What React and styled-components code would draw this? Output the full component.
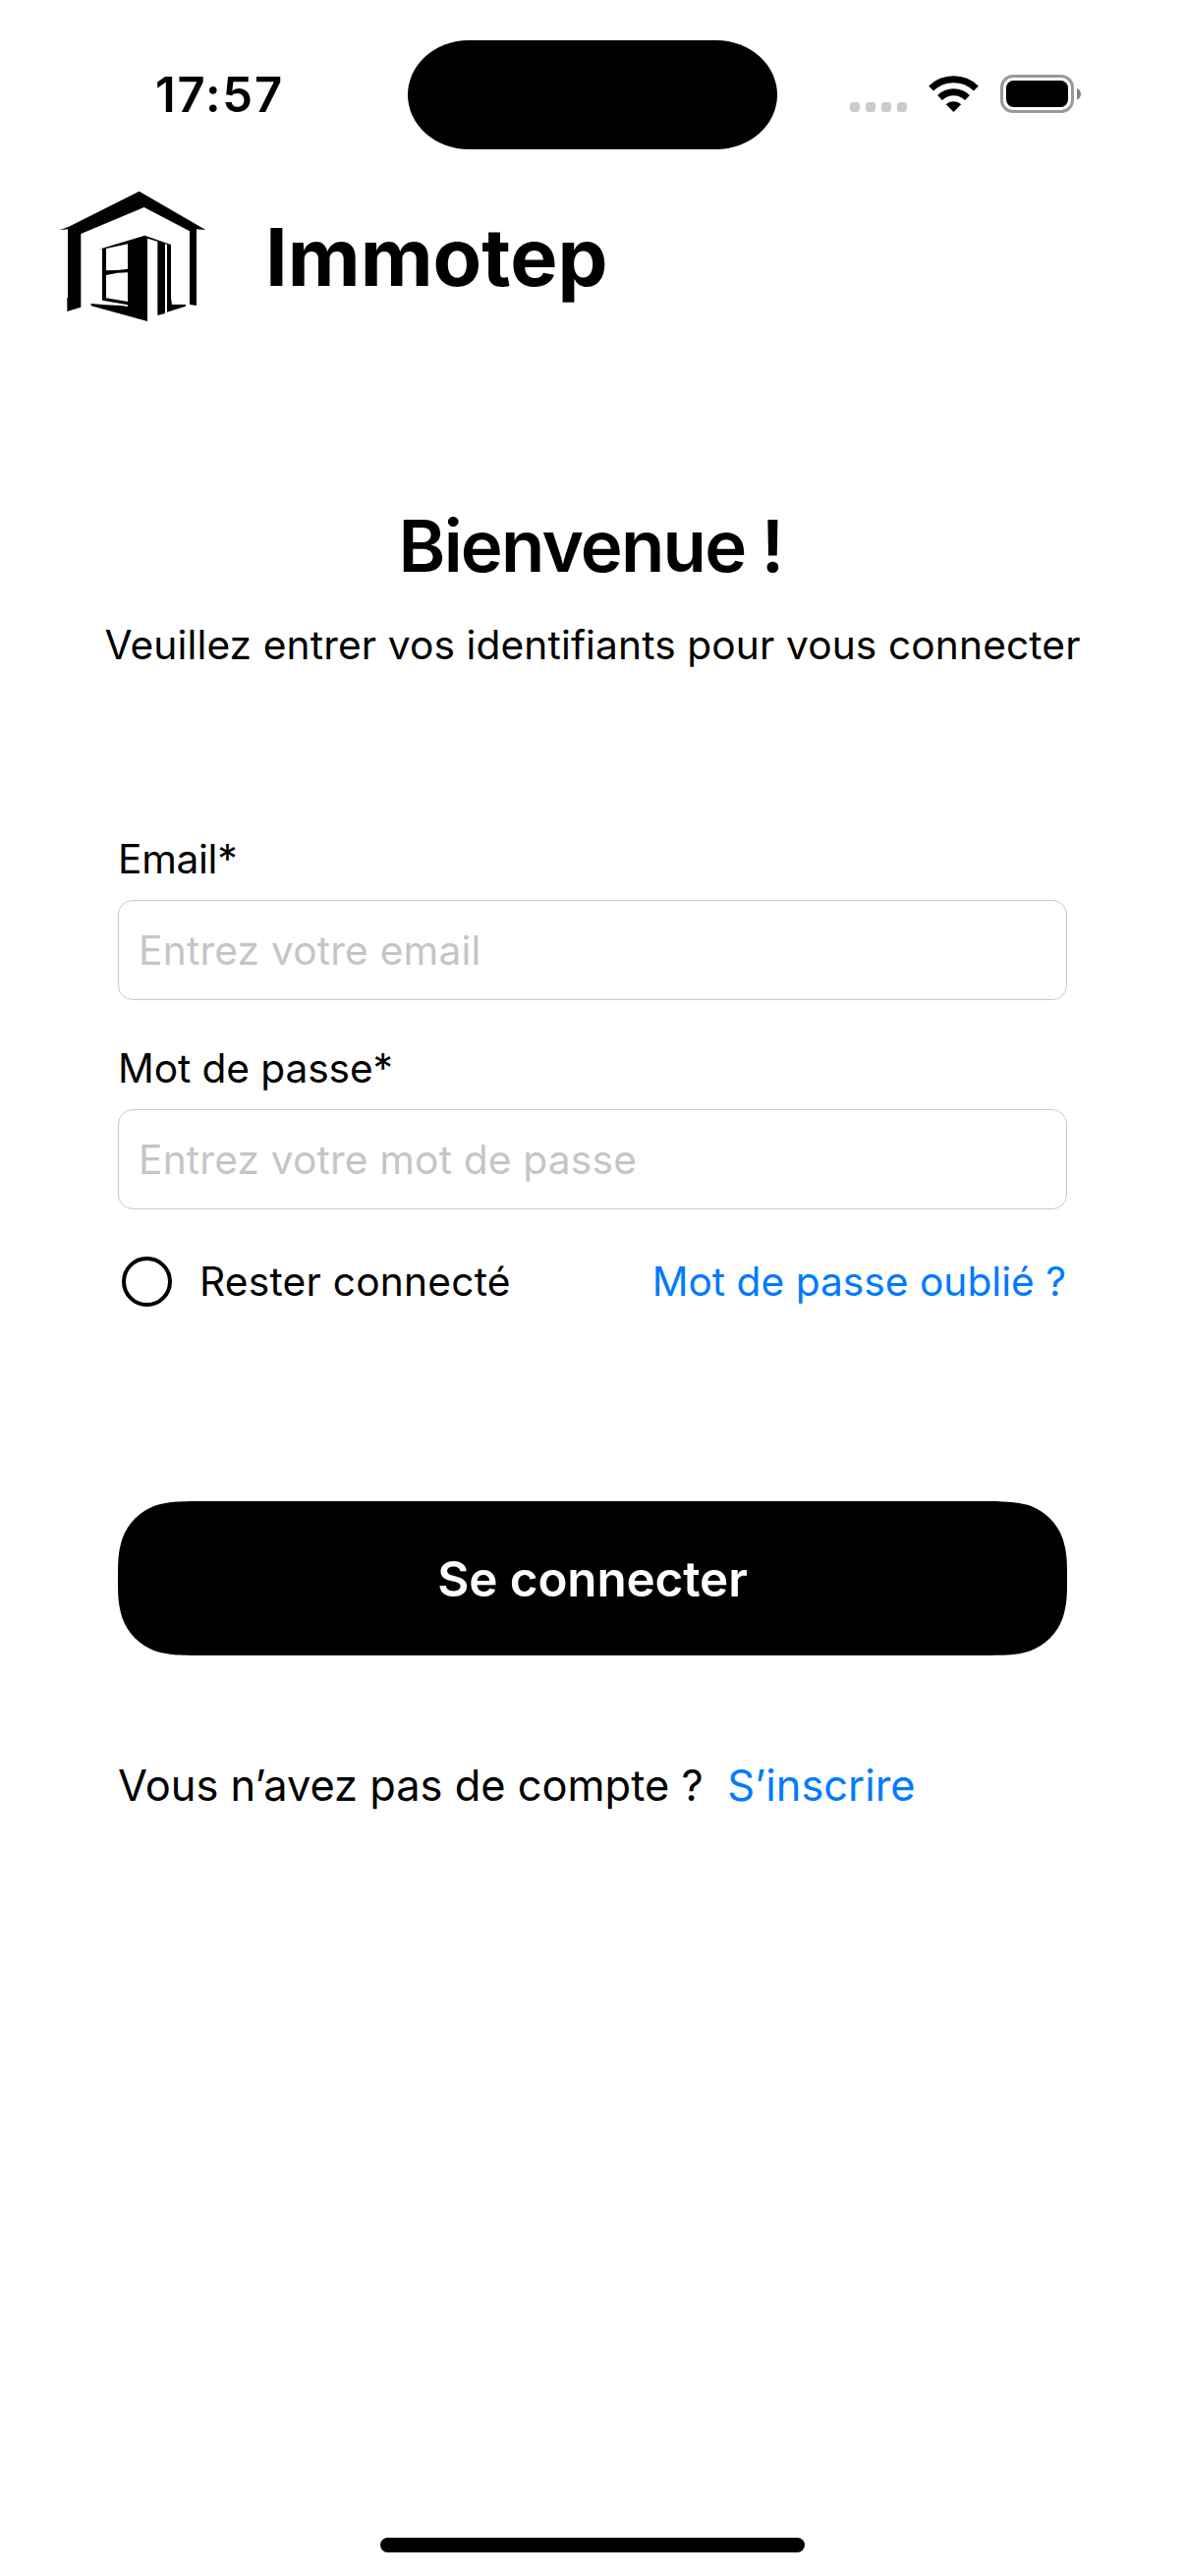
import React from "react";
import styled, { createGlobalStyle } from "styled-components";

const GlobalStyle = createGlobalStyle`
  *, *::before, *::after { box-sizing: border-box; }
  body { margin: 0; background: #fff; }
`;

const Screen = styled.main`
  width: 1206px;
  height: 2622px;
  display: flex;
  flex-direction: column;
  background: #fff;
  color: #000;
  font-family: Inter, "Liberation Sans", sans-serif;
  overflow: hidden;
`;

const StatusBar = styled.div`
  height: 193px;
  padding-top: 41px;
  display: grid;
  grid-template-columns: 414px 378px 1fr;
  align-items: start;
`;

const Clock = styled.time`
  padding: 0 0 0 158px;
  font-size: 49px;
  line-height: 111px;
  font-weight: 600;
  letter-spacing: ${(p) => p.$track}px;
`;

const Island = styled.div`
  width: 376px;
  height: 111px;
  margin-left: 1px;
  border-radius: 62px / 55.5px;
  background: #000;
`;

const StatusIcons = styled.div`
  height: 111px;
  padding: 35px 0 0 73px;
  display: flex;
`;

const Brand = styled.header`
  height: 135px;
  padding-left: 60px;
  display: flex;
  align-items: center;
  gap: 60px;
`;

const BrandName = styled.span`
  padding-top: 3px;
  font-size: 81px;
  line-height: 132px;
  font-weight: 700;
  letter-spacing: ${(p) => p.$track}px;
`;

const Intro = styled.section`
  margin-top: 178px;
  display: flex;
  flex-direction: column;
  align-items: center;
`;

const Title = styled.h1`
  margin: 0;
  padding-right: 4px;
  font-size: 72.6px;
  line-height: 100px;
  font-weight: 600;
  letter-spacing: ${(p) => p.$track}px;
`;

const Subtitle = styled.p`
  margin: 26px 0 0;
  font-size: 40.7px;
  line-height: 50px;
  white-space: nowrap;
  letter-spacing: ${(p) => p.$track}px;
`;

const Form = styled.form`
  margin-top: 168px;
  padding: 0 120px;
  display: flex;
  flex-direction: column;
`;

const Field = styled.label`
  display: flex;
  flex-direction: column;
  gap: 16px;
  margin-bottom: 45px;
`;

const Label = styled.span`
  font-size: 40.7px;
  line-height: 50px;
  letter-spacing: ${(p) => p.$track}px;
`;

const Input = styled.input`
  width: 966px;
  height: 102px;
  padding: 0 20px;
  border: 1px solid #c9c9ca;
  border-radius: 15px;
  outline: none;
  background: #fff;
  font: 400 40.7px Inter, "Liberation Sans", sans-serif;
  letter-spacing: ${(p) => p.$track}px;
  &::placeholder { color: #c5c5c7; opacity: 1; }
`;

const Options = styled.div`
  height: 57px;
  display: flex;
  align-items: center;
  padding: 0 1px 0 4px;
`;

const Radio = styled.span`
  width: 51px;
  height: 51px;
  border: 4.4px solid #000;
  border-radius: 50%;
  margin-right: 28px;
`;

const OptionText = styled.span`
  font-size: 40.7px;
  line-height: 55px;
  letter-spacing: ${(p) => p.$track}px;
`;

const Link = styled.a`
  color: #007aff;
  font-size: ${(p) => p.$size}px;
  line-height: 55px;
  margin-left: ${(p) => p.$left};
  letter-spacing: ${(p) => p.$track}px;
  white-space: nowrap;
`;

const Submit = styled.button`
  width: 966px;
  height: 157px;
  margin-top: 195px;
  border: 0;
  padding: 0;
  background: #000;
  color: #fff;
  font: 600 49.4px Inter, "Liberation Sans", sans-serif;
  letter-spacing: ${(p) => p.$track}px;
  clip-path: path("M91.7 0 H874.3 C900.7 0 913.9 0 928.1 4.5 C943.6 10.1 955.9 22.4 961.5 37.9 C966 52.1 966 62 966 78.5 C966 95 966 104.9 961.5 119.1 C955.9 134.6 943.6 146.9 928.1 152.5 C913.9 157 900.7 157 874.3 157 H91.7 C65.3 157 52.1 157 37.9 152.5 C22.4 146.9 10.1 134.6 4.5 119.1 C0 104.9 0 95 0 78.5 C0 62 0 52.1 4.5 37.9 C10.1 22.4 22.4 10.1 37.9 4.5 C52.1 0 65.3 0 91.7 0 Z");
`;

const SignUp = styled.p`
  margin: 105px 0 0;
  font-size: 43.4px;
  line-height: 55px;
  letter-spacing: ${(p) => p.$track}px;
  white-space: nowrap;
`;

const HomeIndicator = styled.div`
  width: 432px;
  height: 15px;
  margin: auto auto 24px 387px;
  border-radius: 8px;
  background: #000;
`;

function Logo() {
  return (
    <svg width="150" height="135" viewBox="60 39 450 405" fill="#000">
      <path d="M305 44 L508 162 L480 160 V393 L459 390 V166 L320 93 L127 174 V398 L85 411 V368 H87 V160 L62 162 L90 152 Z" />
      <path
        fillRule="evenodd"
        d="M182 221 L322 179 L402 207 V370 L405 390 H447 V395 L390 413 V206 L384 205 V417 L361 423 V197 L330 188 V441 L158 394 V387 L200 391 L248 393 L270 396 V391 L192 377 V220 Z M204 219 V286 L240 285 L270 281 V205 Z M204 300 V370 L270 381 V292 L240 293 Z"
      />
    </svg>
  );
}

function Indicators() {
  return (
    <svg width="236" height="40" viewBox="865 76 236 40">
      {[0, 1, 2, 3].map((i) => (
        <rect key={i} x={865 + i * 16} y="104" width="10" height="10" rx="3.2" fill="#cbcbcb" />
      ))}
      <g fill="none" stroke="#000">
        <path d="M947.6 90 A33 33 0 0 1 993.4 90" strokeWidth="7" />
        <path d="M956.5 99.5 A20 20 0 0 1 984.5 99.5" strokeWidth="7" />
      </g>
      <path d="M970.5 114 L962.8 106.3 A11 11 0 0 1 978.2 106.3 Z" />
      <rect x="1019.5" y="77.5" width="72" height="36" rx="11.5" fill="none" stroke="#999" strokeWidth="3" />
      <rect x="1024" y="82" width="63" height="27" rx="7.5" />
      <path d="M1096 90 C1101.3 92 1101.3 99.5 1096 101.5 Z" fill="#808080" />
    </svg>
  );
}

export default function App() {
  return (
    <Screen>
      <GlobalStyle />
      <StatusBar>
        <Clock $track={1.8}>17:57</Clock>
        <Island />
        <StatusIcons>
          <Indicators />
        </StatusIcons>
      </StatusBar>
      <Brand>
        <Logo />
        <BrandName $track={0}>Immotep</BrandName>
      </Brand>
      <Intro>
        <Title $track={-1.8}>Bienvenue !</Title>
        <Subtitle $track={0.11}>Veuillez entrer vos identifiants pour vous connecter</Subtitle>
      </Intro>
      <Form>
        <Field>
          <Label $track={-0.3}>Email*</Label>
          <Input type="email" placeholder="Entrez votre email" $track={0.2} />
        </Field>
        <Field>
          <Label $track={-0.1}>Mot de passe*</Label>
          <Input type="password" placeholder="Entrez votre mot de passe" $track={0.17} />
        </Field>
        <Options>
          <Radio />
          <OptionText $track={0.22}>Rester connecté</OptionText>
          <Link $size={40.7} $left="auto" $track={0}>Mot de passe oublié ?</Link>
        </Options>
        <Submit type="button" $track={-0.12}>Se connecter</Submit>
        <SignUp $track={0}>
          Vous n’avez pas de compte ?
          <Link $size={43.4} $left="24.5px" $track={0}>S’inscrire</Link>
        </SignUp>
      </Form>
      <HomeIndicator />
    </Screen>
  );
}
